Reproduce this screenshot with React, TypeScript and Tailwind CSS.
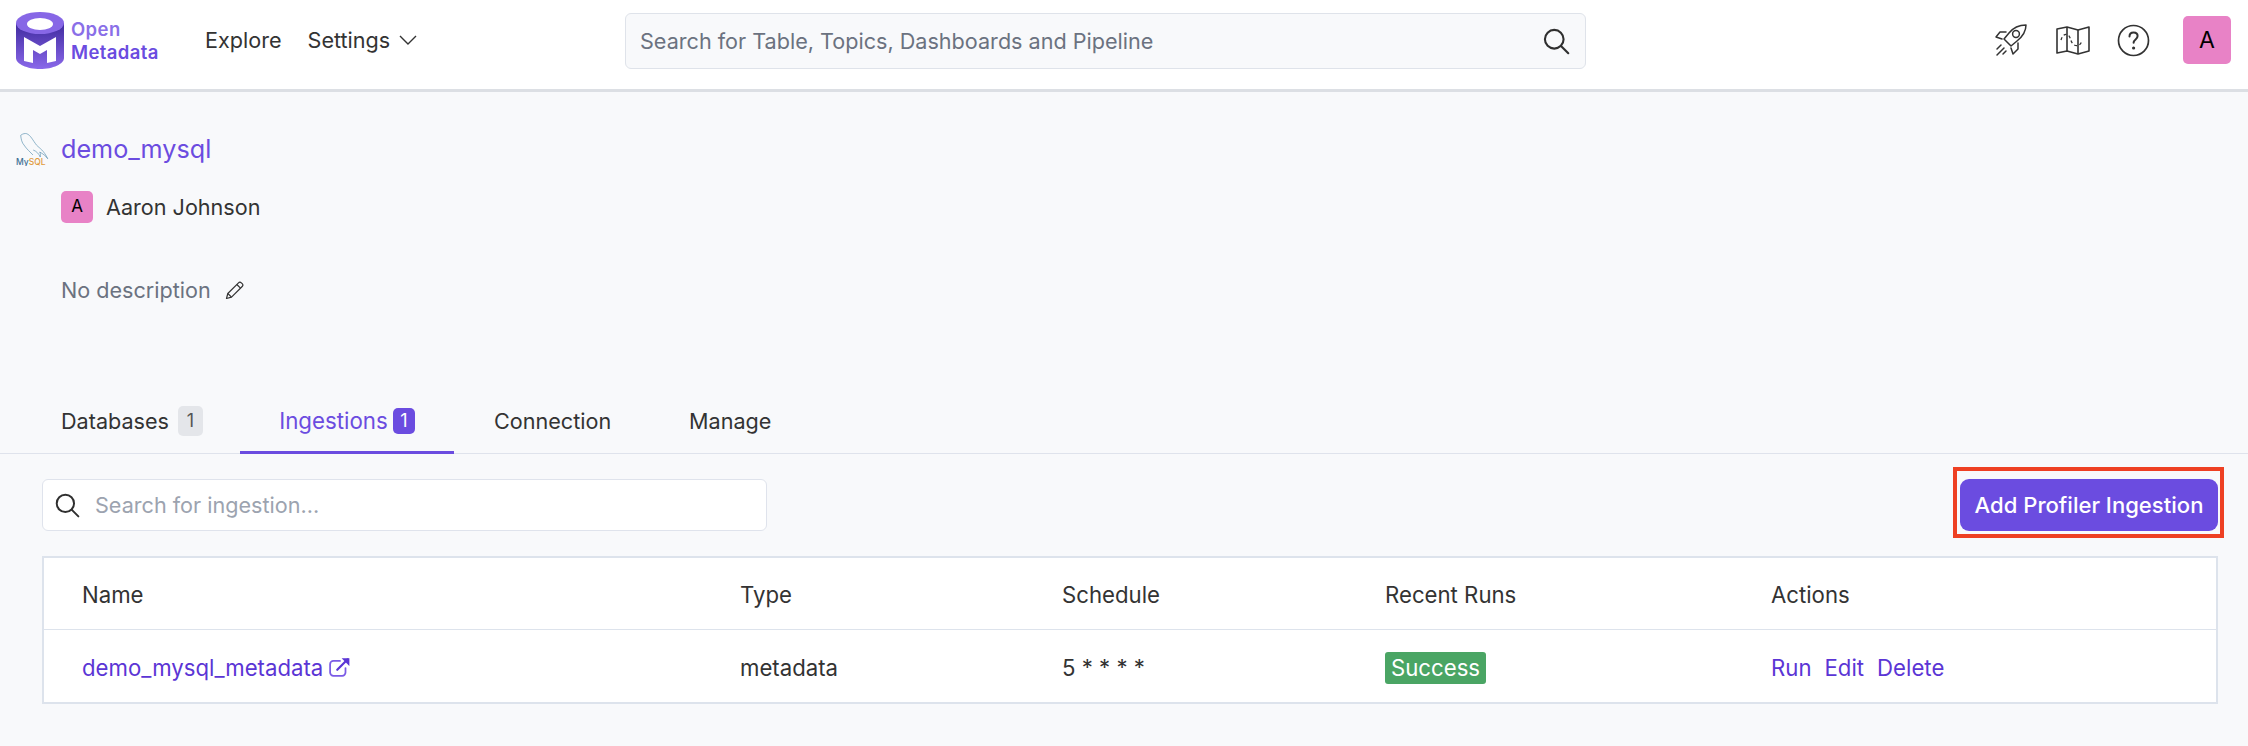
import React from 'react';

const Logo = () => (
  <svg width="48" height="57" viewBox="0 0 48 57" fill="none">
    <defs>
      <linearGradient id="body" x1="0" y1="0" x2="0" y2="1">
        <stop offset="0" stopColor="#3f2a9e" />
        <stop offset="1" stopColor="#8a68ea" />
      </linearGradient>
    </defs>
    <path d="M0 11v35c0 6 11 11 24 11s24-5 24-11V11z" fill="url(#body)" />
    <ellipse cx="24" cy="11" rx="24" ry="11" fill="#8767e6" />
    <ellipse cx="24" cy="12" rx="13" ry="6" fill="#fff" />
    <path d="M8 25l16 9 16-9v24l-9 2V38l-7 4-7-4v13l-9-2z" fill="#fff" />
  </svg>
);

const MysqlLogo = () => (
  <svg width="34" height="34" viewBox="0 0 34 34" fill="none">
    <path d="M4.700 3.300C7 1.500 9 1.300 10.700 1.700c4 1.500 6 6.500 10 11.600 3 3 7 5 11 13.400-2-3-5-5-8-6.700 1 2 1 3 .5 5-1-3-4-6-7-7M4.700 3.300C5 7 6 11 8 13c2 3 4 5 6 7l3 3" stroke="#4a86a8" strokeWidth="0.6" fill="none" />
    <text x="0" y="33" fontSize="8.5" fontWeight="500" fontFamily="Inter, sans-serif" fill="#3f6f93">My<tspan fill="#e19a3c">SQL</tspan></text>
  </svg>
);

const SearchIcon = ({ size }: { size: number }) => (
  <svg width={size} height={size} viewBox="0 0 24 24" fill="none" stroke="#2f2f2f" strokeWidth="1.8" strokeLinecap="round">
    <circle cx="10.5" cy="10.5" r="8" />
    <path d="M16.5 16.5l6 6" />
  </svg>
);

const RocketIcon = () => (
  <svg width="34" height="34" viewBox="0 0 34 34" fill="none" stroke="#333" strokeWidth="1.5" strokeLinecap="round" strokeLinejoin="round">
    <path d="M33 2c-7 0-13 3-17 8l-5 6 7 7 6-5c5-4 9-10 9-16z" />
    <circle cx="23" cy="11" r="3.4" />
    <path d="M13 9l-6 0-4 5 6 2M25 20l0 6-5 5-2-6" />
    <path d="M8 22l-4 4M11 25l-7 7M13 28l-3 3" />
  </svg>
);

const MapIcon = () => (
  <svg width="34" height="30" viewBox="0 0 34 30" fill="none" stroke="#333" strokeWidth="1.6" strokeLinejoin="round">
    <path d="M1 4l10-2 11 3 11-3v24l-11 3-11-3-10 2z" />
    <path d="M11 2v24M22 5v24" />
    <path d="M5 15c1-4 4-7 7-5 3 2 2 6 5 9 3 3 8 2 9-4" strokeDasharray="3 2.5" strokeWidth="1.3" />
  </svg>
);

const HelpIcon = () => (
  <svg width="33" height="33" viewBox="0 0 33 33" fill="none" stroke="#333" strokeWidth="1.7" strokeLinecap="round">
    <circle cx="16.5" cy="16.5" r="15" />
    <path d="M12.5 12.5c0-2.6 1.8-4 4.1-4 2.3 0 4 1.5 4 3.6 0 3.4-4 3.3-4 6.7" strokeWidth="2" />
    <circle cx="16.6" cy="24" r="0.8" strokeWidth="1.6" />
  </svg>
);

const PencilIcon = () => (
  <svg width="19" height="19" viewBox="0 0 19 19" fill="none" stroke="#333" strokeWidth="1.2" strokeLinejoin="round">
    <path d="M1.5 17.5l1.3-5L13.5 1.800c.8-.8 2-.8 2.800 0l.9.9c.8.8.8 2 0 2.800L6.500 16.200z" />
    <path d="M11.800 3.500l3.700 3.700M2.800 12.500l3.700 3.700" />
  </svg>
);

const ExternalIcon = () => (
  <svg width="22" height="20" viewBox="0 0 20 18" fill="none" stroke="#7b5be6" strokeWidth="1.6" strokeLinecap="round" strokeLinejoin="round">
    <path d="M10 3.500H4a3 3 0 0 0-3 3V14a3 3 0 0 0 3 3h8a3 3 0 0 0 3-3v-4" />
    <path d="M7.500 11.500L17 2" stroke="#5b35d5" strokeWidth="2" />
    <path d="M11.500 1h7v7z" fill="#5b35d5" stroke="none" />
  </svg>
);

const Avatar = ({ size }: { size: 'lg' | 'sm' }) => (
  <div className={size === 'lg'
    ? 'flex h-[48px] w-[48px] items-center justify-center rounded-[5px] bg-[#e882c6] text-[23px] text-black'
    : 'flex h-[32px] w-[32px] items-center justify-center rounded-[5px] bg-[#e882c6] text-[17px] text-black'}>
    A
  </div>
);

export default function App() {
  return (
    <div className="flex min-h-screen flex-col bg-[#f8f9fb] font-[Inter,sans-serif] text-[21.6px] text-[#333] [font-optical-sizing:none]">
      {/* Navbar */}
      <header className="flex h-[92px] shrink-0 items-start border-b-[3px] border-[#dcdfe4] bg-white">
        <div className="ml-[16px] mt-[12px] flex w-[189px] items-center gap-[7px]">
          <Logo />
          <div className="text-[18.5px] font-semibold leading-[23px] tracking-[0.4px]">
            <div className="text-[#8a6fe8]">Open</div>
            <div className="text-[#6b4ce0]">Metadata</div>
          </div>
        </div>
        <nav className="mt-[27px] flex w-[420px] items-center leading-[26px]">
          <span>Explore</span>
          <span className="ml-[26px]">Settings</span>
          <svg className="ml-[9px]" width="18" height="11" viewBox="0 0 18 11" fill="none" stroke="#333" strokeWidth="1.4">
            <path d="M1 1l8 8 8-8" />
          </svg>
        </nav>
        <div className="mt-[13px] flex h-[56px] w-[961px] items-center justify-between rounded-[6px] border border-[#dfe3ea] bg-[#f8f9fb] pl-[14px] pr-[15px]">
          <span className="text-[#6b7280]">Search for Table, Topics, Dashboards and Pipeline</span>
          <SearchIcon size={28} />
        </div>
        <div className="ml-auto mr-[17px] mt-[16px] flex items-center">
          <RocketIcon />
          <div className="ml-[29px]"><MapIcon /></div>
          <div className="ml-[27px]"><HelpIcon /></div>
          <div className="ml-[33px]"><Avatar size="lg" /></div>
        </div>
      </header>

      {/* Service header */}
      <section className="pl-[16px] pt-[39px]">
        <div className="flex items-center gap-[11px]">
          <MysqlLogo />
          <span className="text-[25.2px] leading-[36px] text-[#6b4ce0]">demo_mysql</span>
        </div>
        <div className="ml-[45px] mt-[24px] flex items-center gap-[13px]">
          <Avatar size="sm" />
          <span>Aaron Johnson</span>
        </div>
        <div className="ml-[45px] mt-[52px] flex items-center gap-[14px] leading-[30px] text-[#6b7280]">
          <span>No description</span>
          <PencilIcon />
        </div>
      </section>

      {/* Tabs */}
      <div className="mt-[99px] flex h-[50px] items-start border-b border-[#dfe3ec] pl-[61px] leading-[34px]">
        <div className="flex w-[179px] items-center gap-[9px]">
          <span>Databases</span>
          <span className="flex h-[30px] w-[25px] items-center justify-center rounded-[5px] bg-[#e4e6ea] text-[18px] text-[#555]">1</span>
        </div>
        <div className="flex h-[50px] w-[214px] items-start justify-center gap-[5px] border-b-[3px] border-[#6b4ce0] text-[22.3px] text-[#6b4ce0]">
          <span>Ingestions</span>
          <span className="mt-[4px] flex h-[26px] w-[22px] items-center justify-center rounded-[5px] bg-[#6b4ce0] text-[18px] text-white">1</span>
        </div>
        <span className="ml-[40px] w-[195px]">Connection</span>
        <span>Manage</span>
      </div>

      {/* Search and action */}
      <div className="flex items-start justify-between pl-[42px] pr-[24px] pt-[13px]">
        <div className="mt-[12px] flex h-[52px] w-[725px] items-center gap-[15px] rounded-[6px] border border-[#dfe3ec] bg-white pl-[11px]">
          <SearchIcon size={26} />
          <span className="text-[#9ca3af]">Search for ingestion...</span>
        </div>
        <div className="border-[4px] border-[#ee4023] pb-[3px] pl-[3px] pr-[2px] pt-[8px]">
          <button className="h-[52px] w-[258px] rounded-[9px] bg-[#6b4ce0] text-[22.1px] font-[450] text-white">
            Add Profiler Ingestion
          </button>
        </div>
      </div>

      {/* Ingestions table */}
      <div className="ml-[42px] mr-[30px] mt-[18px] border-2 border-[#dde3ec] bg-white text-[22.2px]">
        <div className="grid h-[72px] grid-cols-[658px_322px_323px_386px_1fr] items-center border-b border-[#dde3ec] pl-[38px] pt-[1px] font-[420]">
          <span>Name</span>
          <span>Type</span>
          <span>Schedule</span>
          <span>Recent Runs</span>
          <span>Actions</span>
        </div>
        <div className="grid h-[72px] grid-cols-[658px_322px_323px_386px_1fr] items-center pl-[38px] pt-[2px]">
          <div className="flex items-center gap-[6px] text-[#5b35d5]">
            <span>demo_mysql_metadata</span>
            <ExternalIcon />
          </div>
          <span>metadata</span>
          <span>5 * * * *</span>
          <div>
            <span className="inline-block rounded-[3px] bg-[#4aa564] px-[6px] leading-[32px] text-white">Success</span>
          </div>
          <div className="flex gap-[13px] text-[#5b35d5]">
            <span>Run</span>
            <span>Edit</span>
            <span>Delete</span>
          </div>
        </div>
      </div>
    </div>
  );
}
